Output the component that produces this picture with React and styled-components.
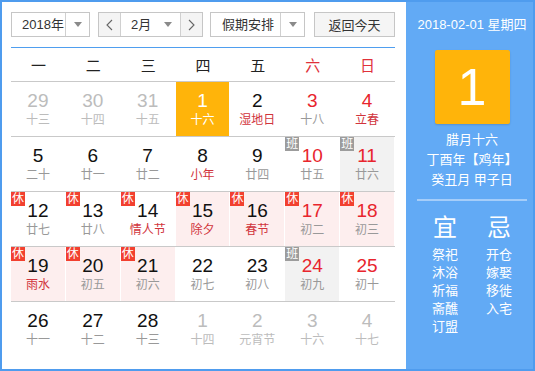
import React from "react";
import styled, { createGlobalStyle } from "styled-components";

const Global = createGlobalStyle`
  html, body { margin: 0; padding: 0; background: #fff; }
  body { font-family: "Liberation Sans", "Noto Sans CJK SC", sans-serif; }
  * { box-sizing: border-box; }
`;

const Frame = styled.div`
  width: 535px;
  height: 371px;
  border: 2px solid #4f9cee;
  display: flex;
  background: #fff;
  overflow: hidden;
`;

const Main = styled.div`
  width: 404px;
  padding: 10px 11px 0 9px;
  display: flex;
  flex-direction: column;
`;

const Toolbar = styled.div`
  display: flex;
  height: 36px;
  padding-bottom: 11px;
  border-bottom: 1px solid #4f9eef;
`;

const Select = styled.div`
  width: ${(p) => p.$w}px;
  height: 25px;
  margin-right: ${(p) => p.$mr || 0}px;
  border: 1px solid #c6c6c6;
  display: flex;
  align-items: center;
  font-size: 13px;
  color: #333;
  background: #fff;
`;

const SelectText = styled.span`
  flex: 1;
  padding-left: ${(p) => p.$pl ?? 10}px;
  line-height: 23px;
`;

const Caret = styled.span`
  width: ${(p) => p.$w || 24}px;
  height: 23px;
  border-left: ${(p) => (p.$noDivider ? "none" : "1px solid #d0d0d0")};
  display: flex;
  align-items: center;
  justify-content: center;
  &::after {
    content: "";
    border-left: 4px solid transparent;
    border-right: 4px solid transparent;
    border-top: 5px solid #8a8a8a;
  }
`;

const MonthGroup = styled.div`
  display: flex;
  height: 25px;
  width: 105px;
  margin-right: 7px;
  border: 1px solid #c6c6c6;
  font-size: 13px;
  color: #333;
`;

const ArrowBtn = styled.span`
  width: 22px;
  height: 23px;
  background: #f4f4f4;
  display: flex;
  align-items: center;
  justify-content: center;
  border-${(p) => (p.$side === "l" ? "right" : "left")}: 1px solid #d0d0d0;
`;

const MonthSel = styled.div`
  flex: 1;
  display: flex;
  align-items: center;
  background: #fff;
`;

const TodayBtn = styled.button`
  width: 81px;
  height: 25px;
  margin-left: auto;
  border: 1px solid #c6c6c6;
  background: #f5f5f5;
  font-family: inherit;
  font-size: 13px;
  color: #333;
  padding: 0;
`;

const Header = styled.div`
  display: grid;
  grid-template-columns: repeat(7, 1fr);
  height: 33px;
  align-items: center;
  text-align: center;
  font-size: 15px;
`;

const Wd = styled.span`
  color: ${(p) => (p.$red ? "#e0313a" : "#222")};
`;

const Week = styled.div`
  display: grid;
  grid-template-columns: repeat(7, 1fr);
  height: 55px;
  border-top: 1px solid #c9c9c9;
`;

const bgMap = { pink: "#fdeeee", gray: "#f2f2f2", sel: "#ffb40a" };

const Cell = styled.div`
  position: relative;
  height: 54px;
  border-right: 1px solid #fff;
  background: ${(p) => bgMap[p.$bg] || "#fff"};
  text-align: center;
  padding-top: 8px;
`;

const Num = styled.div`
  font-size: 19px;
  line-height: 22px;
  color: ${(p) => p.$c};
`;

const Lunar = styled.div`
  font-size: 12px;
  line-height: 16px;
  color: ${(p) => p.$c};
`;

const Badge = styled.span`
  position: absolute;
  top: 0;
  left: 0;
  width: 14px;
  height: 14px;
  font-size: 12px;
  line-height: 14px;
  color: #fff;
  text-align: center;
  background: ${(p) => (p.$kind === "xiu" ? "#f2402f" : "#9c9c9c")};
`;

const Side = styled.div`
  flex: 1;
  background: #62aaf5;
  color: #fff;
  padding: 13px 0 0 5px;
  display: flex;
  flex-direction: column;
  align-items: center;
`;

const DateLine = styled.div`
  font-size: 13px;
  line-height: 20px;
`;

const DayBox = styled.div`
  width: 75px;
  height: 74px;
  margin-top: 15px;
  background: #ffb40a;
  border-radius: 2px;
  box-shadow: 0 1px 2px rgba(0, 0, 0, 0.15);
  display: flex;
  align-items: center;
  justify-content: center;
  font-size: 52px;
  line-height: 1;
`;

const LunarInfo = styled.div`
  margin-top: 6px;
  font-size: 13px;
  line-height: 20px;
  text-align: center;
`;

const Divider = styled.div`
  width: 110px;
  height: 2px;
  margin-top: 9px;
  background: #a5cdf9;
`;

const YiJi = styled.div`
  display: flex;
  gap: 4px;
  margin-top: 12px;
`;

const YiCol = styled.div`
  width: 50px;
  text-align: center;
`;

const YiHead = styled.div`
  font-size: 24px;
  line-height: 30px;
  margin-bottom: 3px;
`;

const YiItem = styled.div`
  font-size: 13px;
  line-height: 18px;
`;

const Chevron = ({ dir }) => (
  <svg width="7" height="12" viewBox="0 0 7 12">
    <polyline
      points={dir === "l" ? "6,1 1,6 6,11" : "1,1 6,6 1,11"}
      fill="none"
      stroke="#666"
      strokeWidth="1.1"
    />
  </svg>
);

const c = (d, l, o = {}) => ({ d, l, ...o });

const weeks = [
  [
    c(29, "十三", { dim: 1 }),
    c(30, "十四", { dim: 1 }),
    c(31, "十五", { dim: 1 }),
    c(1, "十六", { bg: "sel" }),
    c(2, "湿地日", { fest: 1 }),
    c(3, "十八"),
    c(4, "立春", { fest: 1 }),
  ],
  [
    c(5, "二十"),
    c(6, "廿一"),
    c(7, "廿二"),
    c(8, "小年", { fest: 1 }),
    c(9, "廿四"),
    c(10, "廿五", { badge: "ban" }),
    c(11, "廿六", { badge: "ban", bg: "gray" }),
  ],
  [
    c(12, "廿七", { badge: "xiu" }),
    c(13, "廿八", { badge: "xiu" }),
    c(14, "情人节", { badge: "xiu", fest: 1 }),
    c(15, "除夕", { badge: "xiu", fest: 1, bg: "pink" }),
    c(16, "春节", { badge: "xiu", fest: 1, bg: "pink" }),
    c(17, "初二", { badge: "xiu", bg: "pink" }),
    c(18, "初三", { badge: "xiu", bg: "pink" }),
  ],
  [
    c(19, "雨水", { badge: "xiu", fest: 1, bg: "pink" }),
    c(20, "初五", { badge: "xiu", bg: "pink" }),
    c(21, "初六", { badge: "xiu", bg: "pink" }),
    c(22, "初七"),
    c(23, "初八"),
    c(24, "初九", { badge: "ban", bg: "gray" }),
    c(25, "初十"),
  ],
  [
    c(26, "十一"),
    c(27, "十二"),
    c(28, "十三"),
    c(1, "十四", { dim: 1 }),
    c(2, "元宵节", { dim: 1 }),
    c(3, "十六", { dim: 1 }),
    c(4, "十七", { dim: 1 }),
  ],
];

const weekdays = ["一", "二", "三", "四", "五", "六", "日"];

function numColor(cell, col) {
  if (cell.bg === "sel") return "#fff";
  if (cell.dim) return "#bcbcbc";
  if (col >= 5) return "#e8252d";
  return "#111";
}

function lunarColor(cell) {
  if (cell.bg === "sel") return "#fff";
  if (cell.dim) return "#bcbcbc";
  if (cell.fest) return "#d1343c";
  return "#999";
}

export default function App() {
  return (
    <>
      <Global />
      <Frame>
        <Main>
          <Toolbar>
            <Select $w={79} $mr={8}>
              <SelectText>2018年</SelectText>
              <Caret />
            </Select>
            <MonthGroup>
              <ArrowBtn $side="l">
                <Chevron dir="l" />
              </ArrowBtn>
              <MonthSel>
                <SelectText $pl={10}>2月</SelectText>
                <Caret $noDivider $w={24} />
              </MonthSel>
              <ArrowBtn $side="r">
                <Chevron dir="r" />
              </ArrowBtn>
            </MonthGroup>
            <Select $w={95}>
              <SelectText $pl={11}>假期安排</SelectText>
              <Caret />
            </Select>
            <TodayBtn>返回今天</TodayBtn>
          </Toolbar>
          <Header>
            {weekdays.map((w, i) => (
              <Wd key={w} $red={i >= 5}>
                {w}
              </Wd>
            ))}
          </Header>
          {weeks.map((wk, wi) => (
            <Week key={wi}>
              {wk.map((cell, ci) => (
                <Cell key={ci} $bg={cell.bg}>
                  {cell.badge && (
                    <Badge $kind={cell.badge}>
                      {cell.badge === "xiu" ? "休" : "班"}
                    </Badge>
                  )}
                  <Num $c={numColor(cell, ci)}>{cell.d}</Num>
                  <Lunar $c={lunarColor(cell)}>{cell.l}</Lunar>
                </Cell>
              ))}
            </Week>
          ))}
        </Main>
        <Side>
          <DateLine>2018-02-01 星期四</DateLine>
          <DayBox>1</DayBox>
          <LunarInfo>
            <div>腊月十六</div>
            <div>丁酉年【鸡年】</div>
            <div>癸丑月 甲子日</div>
          </LunarInfo>
          <Divider />
          <YiJi>
            <YiCol>
              <YiHead>宜</YiHead>
              {["祭祀", "沐浴", "祈福", "斋醮", "订盟"].map((t) => (
                <YiItem key={t}>{t}</YiItem>
              ))}
            </YiCol>
            <YiCol>
              <YiHead>忌</YiHead>
              {["开仓", "嫁娶", "移徙", "入宅"].map((t) => (
                <YiItem key={t}>{t}</YiItem>
              ))}
            </YiCol>
          </YiJi>
        </Side>
      </Frame>
    </>
  );
}
